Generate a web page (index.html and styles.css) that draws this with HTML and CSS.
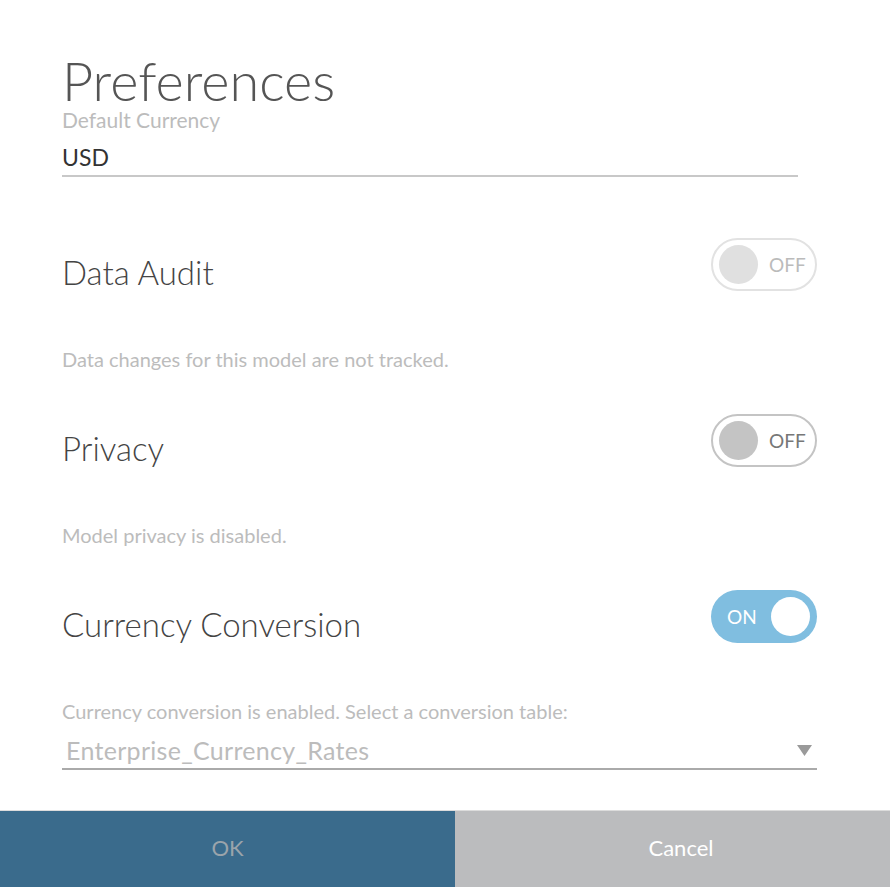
FILE: index.html
```html
<!DOCTYPE html>
<html>
<head>
<meta charset="utf-8">
<link rel="stylesheet" href="styles.css">
</head>
<body>
<div class="dialog">
  <div class="content">
    <h1 class="title">Preferences</h1>
    <div class="field">
      <div class="field-label">Default Currency</div>
      <div class="field-value">USD</div>
    </div>

    <div class="setting">
      <div class="setting-row">
        <div class="setting-name">Data Audit</div>
        <div class="toggle toggle-off toggle-disabled"><span class="knob"></span><span class="toggle-text">OFF</span></div>
      </div>
      <div class="setting-desc">Data changes for this model are not tracked.</div>
    </div>

    <div class="setting">
      <div class="setting-row">
        <div class="setting-name">Privacy</div>
        <div class="toggle toggle-off"><span class="knob"></span><span class="toggle-text">OFF</span></div>
      </div>
      <div class="setting-desc">Model privacy is disabled.</div>
    </div>

    <div class="setting">
      <div class="setting-row">
        <div class="setting-name">Currency Conversion</div>
        <div class="toggle toggle-on"><span class="toggle-text">ON</span><span class="knob"></span></div>
      </div>
      <div class="setting-desc">Currency conversion is enabled. Select a conversion table:</div>
      <div class="select">
        <span class="select-value">Enterprise_Currency_Rates</span>
        <svg class="select-arrow" width="15" height="11" viewBox="0 0 15 11"><polygon points="0,0 15,0 7.5,11" fill="#9a9a9a"/></svg>
      </div>
    </div>
  </div>
  <div class="buttons">
    <button class="btn btn-ok">OK</button>
    <button class="btn btn-cancel">Cancel</button>
  </div>
</div>
</body>
</html>
```
FILE: styles.css
```css
html, body {
  margin: 0;
  padding: 0;
  background: #ffffff;
  font-family: Lato, "Open Sans", sans-serif;
}
.dialog {
  width: 890px;
  height: 887px;
  display: flex;
  flex-direction: column;
  background: #fff;
}
.content {
  flex: 1;
  padding: 54px 73px 0 62px;
}
.title {
  margin: 0;
  font-size: 54px;
  font-weight: 300;
  line-height: 54px;
  color: #555;
}
.field {
  width: 736px;
  border-bottom: 2px solid #c8c8c8;
  padding-bottom: 4px;
}
.field-label {
  font-size: 21px;
  line-height: 24px;
  color: #bcbcbc;
}
.field-value {
  font-size: 23px;
  line-height: 28px;
  color: #333;
  margin-top: 11px;
}
.setting {
  margin-top: 61px;
}
.setting + .setting {
  margin-top: 43px;
}
.setting-row {
  display: flex;
  justify-content: space-between;
  align-items: flex-start;
  height: 53px;
}
.setting-name {
  font-size: 33px;
  font-weight: 300;
  color: #444;
  line-height: 40px;
  margin-top: 14px;
}
.setting-desc {
  font-size: 20px;
  color: #bcbcbc;
  line-height: 24px;
  margin-top: 56px;
}
.toggle {
  box-sizing: border-box;
  width: 106px;
  height: 53px;
  border-radius: 27px;
  display: flex;
  align-items: center;
  padding: 0 6px;
  gap: 11px;
  font-size: 19px;
}
.toggle .knob {
  width: 39px;
  height: 39px;
  border-radius: 50%;
  flex: none;
}
.toggle-off {
  border: 2px solid #c4c4c4;
}
.toggle-off .knob {
  background: #c4c4c4;
}
.toggle-off .toggle-text {
  color: #777;
}
.toggle-disabled {
  border-color: #e2e2e2;
}
.toggle-disabled .knob {
  background: #e0e0e0;
}
.toggle-disabled .toggle-text {
  color: #bbb;
}
.toggle-on {
  background: #80bee0;
  justify-content: space-between;
  padding: 0 7px 0 16px;
}
.toggle-on .toggle-text {
  color: #fff;
}
.toggle-on .knob {
  background: #fff;
}
.select {
  display: flex;
  justify-content: space-between;
  align-items: center;
  border-bottom: 2px solid #aaaaaa;
  padding: 4px 5px 3px 4px;
  margin-top: 8px;
}
.select-value {
  font-size: 25px;
  color: #bcbcbc;
  line-height: 30px;
  letter-spacing: 0.3px;
}
.select-arrow {
  display: block;
}
.buttons {
  display: flex;
  height: 77px;
  box-sizing: border-box;
  border-top: 1px solid #dcdcdc;
}
.btn {
  border: none;
  margin: 0;
  padding-bottom: 5px;
  font-family: Lato, "Open Sans", sans-serif;
  font-size: 22px;
  cursor: pointer;
}
.btn-ok {
  width: 455px;
  background: #3a6b8c;
  color: #9aa4ab;
}
.btn-cancel {
  flex: 1;
  background: #bbbcbe;
  color: #fff;
  padding-left: 23px;
}
```
